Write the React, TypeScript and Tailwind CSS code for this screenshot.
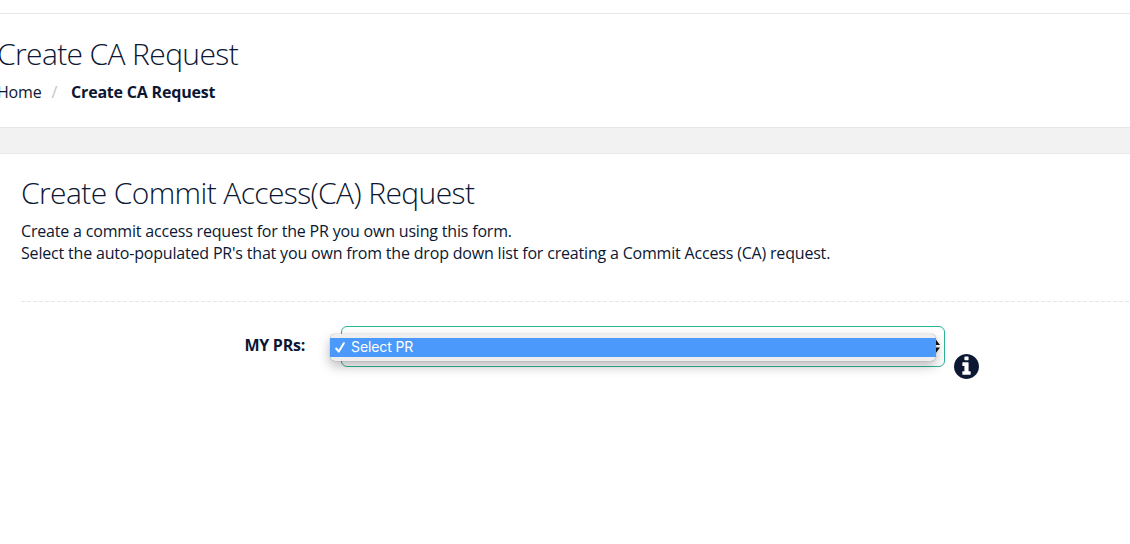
export default function App() {
  return (
    <div className="flex h-[544px] w-full flex-col overflow-hidden bg-white font-['Open_Sans',sans-serif] text-[#0b1733]">
      <div className="h-[14px] shrink-0 border-b border-[#e7e7e7]" />
      <header className="h-[113px] shrink-0 pt-[20px]">
        <h1 className="-ml-[3px] text-[30px] leading-[40px] font-light tracking-[-0.63px] whitespace-nowrap">Create CA Request</h1>
        <nav className="-ml-[3px] mt-[7px] flex text-[16px] leading-[22px] tracking-[-0.2px] whitespace-nowrap">
          <span>Home</span>
          <span className="mr-[13px] ml-[10px] text-[#c4c4c4]">/</span>
          <strong className="ml-px font-bold">Create CA Request</strong>
        </nav>
      </header>
      <div className="h-[27px] shrink-0 border-y border-[#e7e7e7] bg-[#f2f2f2]" />
      <main className="pl-[21px]">
        <h2 className="mt-[19px] text-[30px] leading-[40px] font-light tracking-[-0.61px] whitespace-nowrap">
          Create Commit Access(CA) Request
        </h2>
        <p className="mt-[7px] text-[16px] leading-[22px] tracking-[-0.185px] whitespace-nowrap">
          Create a commit access request for the PR you own using this form.
          <br />
          Select the auto-populated PR's that you own from the drop down list for creating a Commit Access (CA) request.
        </p>
        <div className="mt-[37px] h-px bg-[repeating-linear-gradient(90deg,#e4e6e8_0_4px,transparent_4px_6px)]" />
        <div className="flex pt-[24px]">
          <label className="w-[284px] pt-[8px] text-right text-[16px] leading-[22px] font-bold tracking-[-0.25px]">MY PRs:</label>
          <div className="relative ml-[36px] h-[41px] w-[604px] rounded-[6px] border border-[#2cb496] bg-white">
            <svg className="absolute top-[12px] right-[4px]" width="9" height="15" viewBox="0 0 9 15" fill="#111111">
              <path d="M0 6L4.5 0L9 6ZM0 8.5L4.5 14.5L9 8.5Z" />
            </svg>
            <div className="absolute top-[7px] -left-[12px] h-[27px] w-[606px] rounded-[5px] bg-[#eeeeee] pt-[4px] shadow-[0_0_1px_rgba(0,0,0,0.45),0_5px_12px_rgba(0,0,0,0.28)]">
              <div className="flex h-[19px] items-center bg-[#4a99fb] pl-[5px] font-['Inter',sans-serif] text-[14px] text-white">
                <svg className="mr-[6px]" width="10" height="11" viewBox="0 0 10 11" fill="none" stroke="white" strokeWidth="2" strokeLinecap="round" strokeLinejoin="round">
                  <path d="M1.2 6.5L3.8 9.6L8.8 1.2" />
                </svg>
                <span className="-mt-[2px] leading-[18px] tracking-[-0.1px]">Select PR</span>
              </div>
            </div>
          </div>
          <svg className="mt-[28px] ml-[9px] shrink-0" width="25" height="25" viewBox="0 128 1536 1536" fill="currentColor">
            <path d="M1024 1376v-160q0-14-9-23t-23-9h-96v-512q0-14-9-23t-23-9h-320q-14 0-23 9t-9 23v160q0 14 9 23t23 9h96v320h-96q-14 0-23 9t-9 23v160q0 14 9 23t23 9h448q14 0 23-9t9-23zm-128-896v-160q0-14-9-23t-23-9h-192q-14 0-23 9t-9 23v160q0 14 9 23t23 9h192q14 0 23-9t9-23zm640 416q0 209-103 385.5t-279.5 279.5-385.5 103-385.5-103-279.5-279.5-103-385.5 103-385.5 279.5-279.5 385.5-103 385.5 103 279.5 279.5 103 385.5z" />
          </svg>
        </div>
      </main>
    </div>
  );
}
